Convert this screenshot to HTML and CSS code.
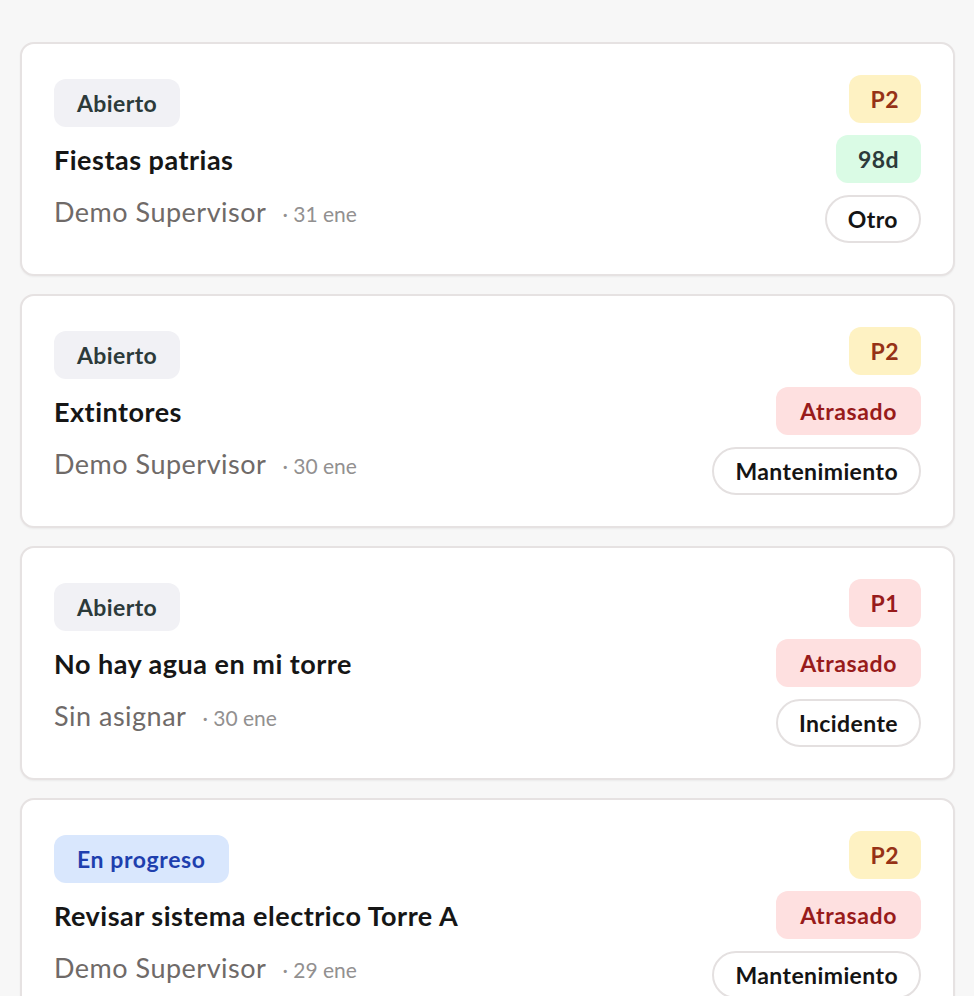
FILE: index.html
```html
<!DOCTYPE html>
<html lang="es">
<head>
  <meta charset="UTF-8">
  <meta name="viewport" content="width=device-width, initial-scale=1.0">
  <title>Tickets</title>
  <link rel="stylesheet" href="styles.css">
</head>
<body>
  <div class="lista">
    <div class="ticket">
      <div class="info">
        <span class="badge estado abierto">Abierto</span>
        <p class="titulo">Fiestas patrias</p>
        <p class="meta"><span class="persona">Demo Supervisor</span><span class="fecha">· 31 ene</span></p>
      </div>
      <div class="etiquetas">
        <span class="badge p2">P2</span>
        <span class="badge dias">98d</span>
        <span class="badge tipo">Otro</span>
      </div>
    </div>

    <div class="ticket">
      <div class="info">
        <span class="badge estado abierto">Abierto</span>
        <p class="titulo">Extintores</p>
        <p class="meta"><span class="persona">Demo Supervisor</span><span class="fecha">· 30 ene</span></p>
      </div>
      <div class="etiquetas">
        <span class="badge p2">P2</span>
        <span class="badge atrasado">Atrasado</span>
        <span class="badge tipo">Mantenimiento</span>
      </div>
    </div>

    <div class="ticket">
      <div class="info">
        <span class="badge estado abierto">Abierto</span>
        <p class="titulo">No hay agua en mi torre</p>
        <p class="meta"><span class="persona">Sin asignar</span><span class="fecha">· 30 ene</span></p>
      </div>
      <div class="etiquetas">
        <span class="badge p1">P1</span>
        <span class="badge atrasado">Atrasado</span>
        <span class="badge tipo">Incidente</span>
      </div>
    </div>

    <div class="ticket">
      <div class="info">
        <span class="badge estado progreso">En progreso</span>
        <p class="titulo">Revisar sistema electrico Torre A</p>
        <p class="meta"><span class="persona">Demo Supervisor</span><span class="fecha">· 29 ene</span></p>
      </div>
      <div class="etiquetas">
        <span class="badge p2">P2</span>
        <span class="badge atrasado">Atrasado</span>
        <span class="badge tipo">Mantenimiento</span>
      </div>
    </div>
  </div>
</body>
</html>
```

FILE: styles.css
```css
body {
  margin: 0;
  background-color: #f7f7f7;
  font-family: 'Lato', 'Noto Sans', sans-serif;
  color: #161616;
}
.lista {
  display: flex;
  flex-direction: column;
  gap: 18px;
  padding: 42px 19px 40px 20px;
}
.ticket {
  display: flex;
  justify-content: space-between;
  align-items: flex-start;
  background-color: #fff;
  border: 2px solid #e6e2e2;
  border-radius: 14px;
  padding: 31px 32px;
  box-shadow: 0 1px 2px rgba(0, 0, 0, 0.05);
}
.info {
  display: flex;
  flex-direction: column;
  align-items: flex-start;
  padding-top: 4px;
}
.badge {
  display: inline-block;
  font-size: 23px;
  font-weight: 700;
  letter-spacing: 0.4px;
  line-height: 28px;
  padding: 10px 23px;
  border-radius: 12px;
  white-space: nowrap;
}
.abierto {
  background-color: #f1f1f5;
  color: #2c3a3a;
}
.progreso {
  background-color: #d9e7fd;
  color: #1e3fae;
  letter-spacing: 0.6px;
}
.titulo {
  margin: 15px 0 0;
  font-size: 27px;
  font-weight: 700;
  letter-spacing: 0.5px;
  line-height: 36px;
  color: #161616;
}
.meta {
  margin: 16px 0 0;
  display: flex;
  align-items: baseline;
  gap: 16px;
  line-height: 36px;
}
.persona {
  font-size: 27px;
  letter-spacing: 0.5px;
  color: #6f6a68;
}
.fecha {
  font-size: 21px;
  color: #929090;
}
.etiquetas {
  display: flex;
  flex-direction: column;
  align-items: flex-end;
  gap: 12px;
}
.p2 {
  background-color: #fef2c3;
  color: #963216;
  padding: 10px 22px;
}
.p1 {
  background-color: #fee0e0;
  color: #981b1b;
  padding: 10px 22px;
}
.dias {
  background-color: #dafbe5;
  color: #2c3a3a;
  padding: 10px 22px;
}
.atrasado {
  background-color: #fee0e0;
  color: #981b1b;
  padding: 10px 24px;
  letter-spacing: 0.6px;
}
.tipo {
  background-color: #fff;
  color: #141414;
  border: 2px solid #e4e0e0;
  border-radius: 26px;
  padding: 8px 21px;
}
```
